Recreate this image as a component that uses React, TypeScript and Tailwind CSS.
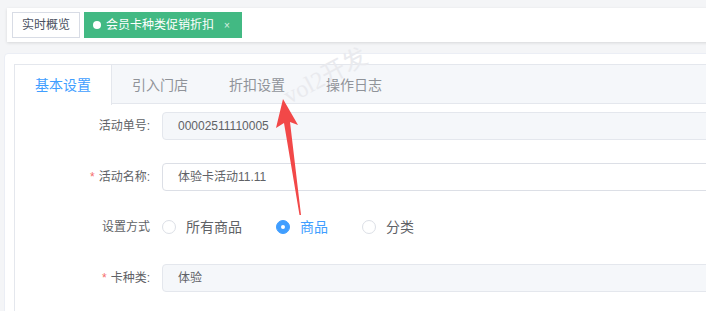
import React from "react";

const font = '"Liberation Sans", "Noto Sans CJK SC", sans-serif';

function Radio({ label, checked }: { label: string; checked?: boolean }) {
  return (
    <div className="flex items-center">
      {checked ? (
        <span className="w-[14px] h-[14px] rounded-full bg-[#409eff] border border-[#409eff] flex items-center justify-center">
          <span className="w-[4px] h-[4px] rounded-full bg-white" />
        </span>
      ) : (
        <span className="w-[14px] h-[14px] rounded-full bg-white border border-[#dcdfe6]" />
      )}
      <span className={`ml-[10px] text-[14px] ${checked ? "text-[#409eff]" : "text-[#606266]"}`}>{label}</span>
    </div>
  );
}

function FormRow({ label, required, children }: { label: string; required?: boolean; children: React.ReactNode }) {
  return (
    <div className="flex items-center h-[28px]">
      <div className="w-[147px] pr-[12px] text-right text-[12px] text-[#606266] shrink-0">
        {required && <span className="text-[#f56c6c] mr-[4px]">*</span>}
        {label}
      </div>
      <div className="flex-1">{children}</div>
    </div>
  );
}

export default function App() {
  const tabs = ["基本设置", "引入门店", "折扣设置", "操作日志"];
  return (
    <div className="relative w-[706px] h-[311px] overflow-hidden bg-[#f4f5f7]" style={{ fontFamily: font }}>
      {/* Tags bar */}
      <div className="mt-[8px] ml-[7px] w-[720px] h-[34px] bg-white shadow-[0_1px_3px_rgba(0,0,0,0.12)] flex items-center pl-[5px] gap-[4px]">
        <div className="h-[26px] px-[9px] flex items-center border border-[#d8dce5] bg-white text-[12px] text-[#495060]">
          实时概览
        </div>
        <div className="h-[26px] pl-[9px] pr-[12px] flex items-center bg-[#42b983] text-white text-[12px]">
          <span className="w-[8px] h-[8px] rounded-full bg-white mr-[5px]" />
          会员卡种类促销折扣
          <span className="ml-[10px] text-[10px] text-white/80">×</span>
        </div>
      </div>

      {/* Card */}
      <div className="mt-[11px] ml-[4px] w-[740px] h-[300px] bg-white rounded-[4px] border border-[#ebeef5] pl-[9px] pt-[10px]">
        <div className="h-full border-l border-t border-[#e4e7ed]">
          <div className="flex h-[39px] bg-[#f5f7fa] border-b border-[#e4e7ed]">
            {tabs.map((t, i) => (
              <div
                key={t}
                className={`h-[40px] w-[97px] px-[20px] flex items-center text-[14px] ${
                  i === 0 ? "bg-white text-[#409eff] border-r border-[#e4e7ed]" : "text-[#909399]"
                }`}
              >
                {t}
              </div>
            ))}
          </div>

          <div className="flex flex-col gap-[22.7px] pt-[8px]">
            <FormRow label="活动单号:">
              <div className="h-[28px] border border-[#e4e7ed] bg-[#f5f7fa] rounded-l-[4px] pl-[15px] flex items-center text-[12px] text-[#606266]">
                00002511110005
              </div>
            </FormRow>
            <FormRow label="活动名称:" required>
              <div className="h-[28px] border border-[#dcdfe6] bg-white rounded-l-[4px] pl-[15px] flex items-center text-[12px] text-[#606266]">
                体验卡活动11.11
              </div>
            </FormRow>
            <FormRow label="设置方式">
              <div className="flex items-center gap-[34px]">
                <Radio label="所有商品" />
                <Radio label="商品" checked />
                <Radio label="分类" />
              </div>
            </FormRow>
            <FormRow label="卡种类:" required>
              <div className="h-[28px] border border-[#e4e7ed] bg-[#f5f7fa] rounded-l-[4px] pl-[15px] flex items-center text-[12px] text-[#606266]">
                体验
              </div>
            </FormRow>
          </div>
        </div>
      </div>

      {/* Watermark */}
      <span
        className="absolute left-[280px] top-[58px] text-[24px] text-[#e9eaee] -rotate-[28deg] pointer-events-none"
        style={{ fontFamily: '"Liberation Serif", "Noto Sans CJK SC", serif' }}
      >
        vol2开发
      </span>

      {/* Annotation arrow */}
      <svg className="absolute inset-0 pointer-events-none" width="706" height="311" viewBox="0 0 706 311">
        <polygon
          points="283,99 298,125 290,122 301,215 299.5,215 284,123 276,128"
          fill="#f24848"
        />
      </svg>
    </div>
  );
}
